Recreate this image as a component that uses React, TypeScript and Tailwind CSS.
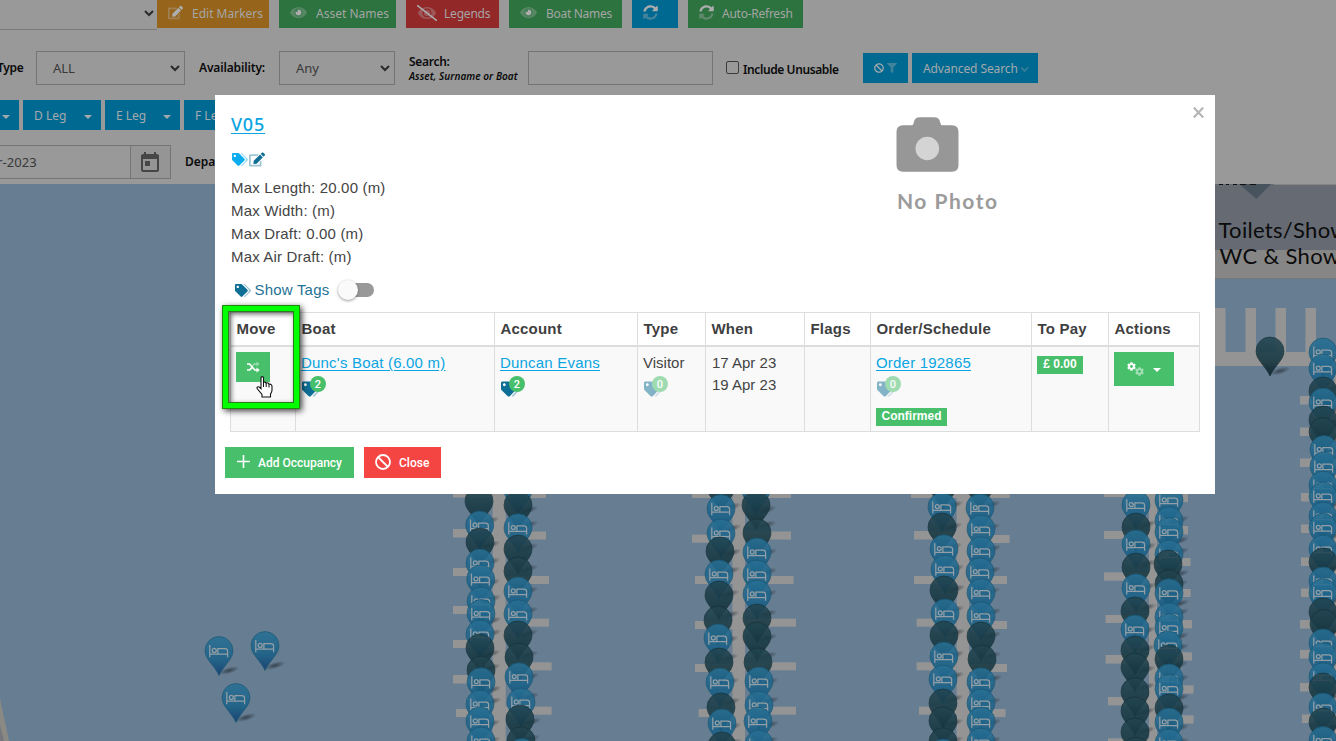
import type { ReactNode } from "react";
import { FaCog, FaBan, FaFilter, FaChevronDown } from "react-icons/fa";
import { MdToday } from "react-icons/md";

/* ---------- duotone icons ---------- */

function TagsIcon({ className }: { className: string }) {
  return (
    <svg viewBox="0 0 640 512" className={className} fill="currentColor">
      <path opacity=".4" d="M625.941 293.823L421.823 497.941c-18.745 18.745-49.137 18.745-67.882 0l-.36-.36L527.64 323.522c16.999-16.999 26.36-39.6 26.36-63.64s-9.362-46.641-26.36-63.64L331.397 0h48.721a48 48 0 0 1 33.941 14.059l211.882 211.882c18.745 18.745 18.745 49.137 0 67.882z" />
      <path d="M497.941 225.941L286.059 14.059A48 48 0 0 0 252.118 0H48C21.49 0 0 21.49 0 48v204.118a48 48 0 0 0 14.059 33.941l211.882 211.882c18.744 18.745 49.136 18.746 67.882 0l204.118-204.118c18.745-18.745 18.745-49.137 0-67.882zM112 160c-26.51 0-48-21.49-48-48s21.49-48 48-48 48 21.49 48 48-21.49 48-48 48z" />
    </svg>
  );
}

function EditIcon({ className }: { className: string }) {
  return (
    <svg viewBox="0 0 576 512" className={className} fill="currentColor">
      <path opacity=".4" d="M384 346.2V448H64V128h229.8c3.2 0 6.2-1.3 8.5-3.5l40-40c7.6-7.6 2.2-20.5-8.5-20.5H48C21.5 64 0 85.5 0 112v352c0 26.5 21.5 48 48 48h352c26.5 0 48-21.5 48-48V306.2c0-10.7-12.9-16-20.5-8.5l-40 40c-2.2 2.3-3.5 5.3-3.5 8.5z" />
      <path d="M402.6 83.2l90.2 90.2c3.8 3.8 3.8 10 0 13.8L274.4 405.6l-92.8 10.3c-12.4 1.4-22.9-9.1-21.5-21.5l10.3-92.8L388.8 83.2c3.8-3.8 10-3.8 13.8 0zm162-22.9l-48.8-48.8c-15.2-15.2-39.9-15.2-55.2 0l-35.4 35.4c-3.8 3.8-3.8 10 0 13.8l90.2 90.2c3.8 3.8 10 3.8 13.8 0l35.4-35.4c15.2-15.3 15.2-40 0-55.2z" />
    </svg>
  );
}

const eyeOuter =
  "M572.52 241.4C518.29 135.59 410.93 64 288 64S57.68 135.64 3.48 241.41a32.35 32.35 0 0 0 0 29.19C57.71 376.41 165.07 448 288 448s230.32-71.64 284.52-177.41a32.35 32.35 0 0 0 0-29.19zM288 400a144 144 0 1 1 144-144 143.93 143.93 0 0 1-144 144z";

function EyeIcon() {
  return (
    <svg viewBox="0 0 576 512" className="h-[15px] w-[17px]" fill="currentColor">
      <path opacity=".35" d={eyeOuter} />
      <circle cx="288" cy="256" r="146" opacity=".2" />
      <path d="M288 160a95.31 95.31 0 0 0-25.31 3.79 47.85 47.85 0 0 1-66.9 66.9A95.78 95.78 0 1 0 288 160z" />
    </svg>
  );
}

function EyeSlashIcon() {
  return (
    <svg viewBox="0 0 640 512" className="h-[16px] w-[20px]" fill="currentColor">
      <g transform="translate(32 0)" opacity=".35">
        <path d={eyeOuter} />
        <circle cx="288" cy="256" r="100" />
      </g>
      <path d="M18 22L622 490" stroke="currentColor" strokeWidth="48" strokeLinecap="round" />
    </svg>
  );
}

function SyncIcon() {
  return (
    <svg viewBox="0 0 512 512" className="h-[15px] w-[15px]" fill="currentColor">
      <path d="M370.72 133.28C339.458 104.008 298.888 87.962 255.848 88c-77.458.068-144.328 53.178-162.791 126.85-1.344 5.363-6.122 9.15-11.651 9.15H24.103c-7.498 0-13.194-6.807-11.807-14.176C33.933 94.924 134.813 8 256 8c66.448 0 126.791 26.136 171.315 68.685L463.03 40.97C478.149 25.851 504 36.559 504 57.941V192c0 13.255-10.745 24-24 24H345.941c-21.382 0-32.09-25.851-16.971-40.971l41.75-41.749z" />
      <path opacity=".4" d="M32 296h134.059c21.382 0 32.09 25.851 16.971 40.971l-41.75 41.75c31.262 29.273 71.835 45.319 114.876 45.28 77.418-.07 144.315-53.144 162.787-126.849 1.344-5.363 6.122-9.15 11.651-9.15h57.304c7.498 0 13.193 6.807 11.807 14.176C478.067 417.076 377.187 504 256 504c-66.448 0-126.791-26.136-171.315-68.685L48.97 471.03C33.851 486.149 8 475.441 8 454.059V320c0-13.255 10.745-24 24-24z" />
    </svg>
  );
}

function ShuffleIcon() {
  return (
    <svg viewBox="0 0 13 12" className="h-[12px] w-[13px]" fill="none" stroke="#fff" strokeWidth="1.7">
      <g opacity=".45">
        <path d="M5.6 5L7.4 3H10" />
        <path d="M9.5 .6L12.6 3L9.5 5.4Z" fill="#fff" stroke="none" />
      </g>
      <path d="M0 9H2.6L5 6.6M0 3H2.6L7.8 9H10" />
      <path d="M9.5 6.4L12.8 9L9.5 11.6Z" fill="#fff" stroke="none" />
    </svg>
  );
}

function Caret({ className }: { className: string }) {
  return (
    <svg viewBox="0 0 8 4" className={`shrink-0 ${className}`} fill="currentColor">
      <path d="M0 0H8L4 4Z" />
    </svg>
  );
}

function SelectArrow() {
  return (
    <svg viewBox="0 0 10 7" className="h-[7px] w-[10px]" fill="none" stroke="#2b2b2b" strokeWidth="2">
      <path d="M1 1L5 5L9 1" />
    </svg>
  );
}

/* ---------- map ---------- */

type Pin = [x: number, top: number, kind: "b" | "d"];

const pins: Pin[] = [
  [219, 636.5, "b"], [265, 631.5, "b"], [236, 683.5, "b"], [1270, 337, "d"],
  // first pontoon
  [479, 487, "d"], [479.7, 511, "b"], [480, 528, "d"], [480, 549, "b"], [480.7, 565, "b"], [481, 587, "b"], [481, 599.5, "b"],
  [480, 620, "b"], [480, 634, "d"], [481, 656, "d"], [481, 667.7, "b"], [480, 690, "b"], [480, 707, "b"], [481, 727, "b"],
  [518, 476, "b"], [518, 491, "d"], [518, 513.7, "b"], [518, 535, "d"], [518, 557, "d"], [518, 577, "b"], [518, 599.7, "b"],
  [518, 621, "d"], [519, 643, "d"], [519, 662.7, "b"], [521, 688, "b"], [520, 705, "d"], [521, 726.7, "d"], [522, 738.5, "b"],
  // second pontoon
  [721, 473, "d"], [721, 494.5, "b"], [721, 519, "b"], [720, 537, "d"], [719, 560, "b"], [719, 581, "d"], [718, 606, "d"],
  [718, 624, "b"], [719, 648, "d"], [720, 668, "b"], [721, 693, "d"], [722, 709, "b"], [722, 732, "d"],
  [756, 476, "b"], [756, 491, "d"], [757, 518.7, "d"], [757, 538, "b"], [757, 560, "b"], [757, 580, "b"], [757, 604, "d"],
  [757, 622, "d"], [758, 648, "d"], [759, 667, "b"], [759, 691, "b"], [758, 707, "b"], [759, 730, "b"],
  // third pontoon
  [943, 471, "d"], [942, 492.7, "b"], [942, 513, "d"], [944, 534.7, "b"], [945, 555, "b"], [944, 576, "d"], [945, 599, "b"],
  [944, 621, "d"], [944, 642, "b"], [943, 665, "b"], [943, 689, "d"], [943, 706.7, "d"], [943, 727.7, "d"], [943, 739, "b"],
  [980, 471, "d"], [980, 493.7, "b"], [981, 515, "b"], [981, 536.7, "b"], [980, 557.7, "b"], [981, 578.5, "b"], [981, 601.7, "b"],
  [981, 622, "d"], [982, 645, "d"], [981, 667.7, "b"], [981, 689, "b"], [981, 707, "b"], [981, 728, "b"],
  // fourth pontoon
  [1136, 490.7, "b"], [1136, 513, "d"], [1136, 530, "b"], [1136, 553, "d"], [1136, 573.7, "b"], [1135, 597, "d"], [1135, 615, "b"],
  [1135, 636, "d"], [1135, 653, "d"], [1135, 677.7, "d"], [1135, 696.7, "d"], [1135, 718, "d"], [1136, 737, "d"],
  [1169, 486, "b"], [1169, 506.7, "b"], [1169, 517.7, "b"], [1169, 540, "b"], [1168, 550, "d"], [1169, 569.7, "d"], [1169, 578.7, "b"],
  [1169, 602.7, "b"], [1169, 613.7, "b"], [1168, 631, "b"], [1169, 645, "d"], [1169, 664, "b"], [1169, 674.5, "b"], [1169, 694, "d"],
  [1169, 708, "b"], [1169, 729, "b"],
  // fifth pontoon
  [1323, 338, "b"], [1323, 354.3, "b"], [1323, 377, "d"], [1323, 388, "b"], [1323, 406, "d"], [1323, 417.6, "d"], [1324, 435.5, "b"],
  [1324, 452, "b"], [1323, 471, "b"], [1323, 482, "b"], [1323, 502, "b"], [1323, 513.4, "b"], [1323, 535, "b"], [1323, 548, "d"],
  [1323, 567, "b"], [1323, 578.6, "b"], [1323, 598, "d"], [1324, 609.5, "d"], [1323, 629, "b"], [1323, 642.7, "b"], [1323, 662.7, "b"],
  [1323, 673, "d"], [1323, 693, "b"], [1323, 708, "d"], [1323, 726.5, "b"],
];

const drawOrder = [...pins].sort((a, b) => a[1] - b[1]);

// [x, y, width, height] of every berth finger and walkway
const planks: [number, number, number, number][] = [
  [492.7, 490, 13, 251], [732.5, 490, 12.5, 251], [956.7, 490, 12.3, 251], [1149, 490, 8, 251], [1334, 352, 4, 389],
  [1215, 308, 10.5, 58], [1245.5, 308, 10.5, 58], [1275.5, 308, 10.5, 58], [1305.5, 308, 10.5, 58], [1215, 352, 121, 14],
  [453, 490, 40, 7.5], [453, 529, 40, 8.5], [453, 568, 40, 8], [453, 606, 40, 8], [453, 640, 40, 8], [453, 675, 40, 8.5], [456, 709, 40, 8],
  [505, 490, 41, 8], [505, 531.5, 41, 8], [505, 576, 44, 8], [505, 618.7, 44, 8], [505, 662.3, 46.6, 8], [505, 706.7, 46.6, 8],
  [692, 490, 40, 8], [692, 534.7, 40, 8], [695, 576, 40, 8], [695, 621, 40, 8], [695, 664, 40, 8], [698.6, 709, 40, 8],
  [745, 490, 46, 8], [745, 531.5, 46, 8], [745, 576, 48.6, 8], [745, 618.7, 51, 8], [745, 662.3, 51, 8], [745, 706.7, 51, 8],
  [911, 490, 46, 8], [914, 531, 43, 8.5], [914, 576, 43, 8], [916.6, 618.7, 40, 8], [916.6, 662.3, 40, 8], [919, 706.7, 40, 8],
  [969, 490, 40.6, 8], [969, 535, 40.6, 8], [969, 576, 38, 8], [969, 621, 38, 8], [969, 664, 38, 8], [969, 709, 36.6, 8],
  [1104, 490, 45, 7], [1104, 531, 45, 8], [1104, 572.3, 45, 8.4], [1105.6, 615, 44, 8], [1105.6, 655, 44, 8.6], [1108, 697, 41, 8.3], [1108, 738.3, 41, 8],
  [1157, 494, 31, 8], [1157, 526, 31, 8.3], [1157, 558, 33.6, 8], [1157, 589, 33.6, 8], [1157, 620, 35, 8.3], [1157, 652.3, 35, 8.3], [1157, 685.3, 36.6, 8.3], [1157, 715.3, 36.6, 8.3],
  [1300, 396, 12, 8.5], [1300, 427.5, 12, 8.5], [1300, 458.5, 12, 8.5], [1301, 493, 12, 8.5], [1301, 524.5, 12, 8.5], [1301, 557.5, 12, 8.5],
  [1301, 588.5, 12, 8.5], [1300, 620, 12, 8.5], [1300, 650, 12, 8.5], [1300, 683, 12, 8.5], [1302, 714.5, 12, 8.5],
];

function MapPin({ x, top, kind }: { x: number; top: number; kind: "b" | "d" }) {
  const blue = kind === "b";
  return (
    <g transform={`translate(${x} ${top})`}>
      <ellipse cx="10" cy="34" rx="11" ry="3.4" transform="rotate(-16 10 34)" fill="url(#shade)" />
      <path
        d="M0 39C-2 34.5-6 29.5-9 25.5C-12 21.5-13.9 18.5-13.9 14A13.9 13.9 0 0 1 13.9 14C13.9 18.5 12 21.5 9 25.5C6 29.5 2 34.5 0 39Z"
        fill={blue ? "url(#bluePin)" : "url(#darkPin)"}
        stroke={blue ? "#1a5876" : "#17323b"}
        strokeWidth=".9"
        opacity=".88"
      />
      {blue && (
        <g fill="none" stroke="#939fa6" strokeWidth="1.25">
          <path d="M-9.2 8.500V20.700M-9.2 17.700H8.6V20.700M-1.1 17.700V12.100H5.8Q8.6 12.100 8.6 14.500V17.700" />
          <circle cx="-4.7" cy="13.9" r="2" />
        </g>
      )}
    </g>
  );
}

function MarinaMap() {
  return (
    <svg viewBox="0 184 1336 557" className="block h-[557px] w-full shrink-0">
      <defs>
        <linearGradient id="bluePin" x1="0" y1="0" x2="0" y2="1">
          <stop offset="0" stopColor="#297195" />
          <stop offset=".6" stopColor="#1a6087" />
          <stop offset="1" stopColor="#133a6e" />
        </linearGradient>
        <linearGradient id="darkPin" x1="0" y1="0" x2="0" y2="1">
          <stop offset="0" stopColor="#234652" />
          <stop offset=".6" stopColor="#163741" />
          <stop offset="1" stopColor="#0b2028" />
        </linearGradient>
        <radialGradient id="shade">
          <stop offset="0" stopColor="#26303a" stopOpacity=".75" />
          <stop offset="1" stopColor="#26303a" stopOpacity="0" />
        </radialGradient>
      </defs>
      <rect y="184" width="1336" height="557" fill="#677e92" />
      <path d="M0 699L9 741H0Z" fill="#8b8984" />
      <path d="M0 725L4 741H0Z" fill="#74777c" />
      <rect x="1200" y="184" width="136" height="66" fill="#666a73" />
      <rect x="1200" y="250" width="136" height="28" fill="#868686" />
      <path d="M1200 278.5H1336" stroke="#75797d" />
      <path d="M1274 184.5H1336" stroke="#858585" />
      <path d="M1239 184H1271L1256.5 199Z" fill="#47545d" />
      <path d="M1219 184.5H1223M1226 184.5H1229M1233 184.5H1237M1240 184.5H1246M1250 184.5H1256" stroke="#111" />
      <g fill="#0b0b0b" fontFamily="Lato, sans-serif" fontSize="22">
        <text x="1218.500" y="237.500" letterSpacing=".3">Toilets/Showers</text>
        <text x="1219.500" y="264" letterSpacing=".35">WC &amp; Showers</text>
      </g>
      <g fill="#949494">
        {planks.map(([x, y, w, h], i) => (
          <rect key={i} x={x} y={y} width={w} height={h} />
        ))}
      </g>
      {drawOrder.map(([x, top, kind], i) => (
        <MapPin key={i} x={x} top={top} kind={kind} />
      ))}
    </svg>
  );
}

/* ---------- page behind the dialog ---------- */

function ToolButton({ className, icon, children }: { className: string; icon: ReactNode; children?: ReactNode }) {
  return (
    <button className={`flex h-[28px] shrink-0 items-center pl-[11px] text-[12px] whitespace-nowrap text-[#a5a5a5] ${className}`}>
      <span className="-mt-[3px] mr-[9px] shrink-0 text-[#adadad]">{icon}</span>
      {children}
    </button>
  );
}

function LegButton({ className, children }: { className: string; children?: ReactNode }) {
  return (
    <button className={`flex h-[30px] shrink-0 items-center bg-[#006991] pr-[9px] text-[12px] whitespace-nowrap text-[#a3a9ac] ${className}`}>
      <span className="mt-[2px]">{children}</span>
      <Caret className="mt-[3px] ml-auto h-[4px] w-[8px]" />
    </button>
  );
}

function Filters() {
  return (
    <header className="h-[184px] shrink-0 bg-[#999] font-['Noto_Sans',sans-serif]">
      <div className="flex h-[30px]">
        <div className="flex w-[157px] shrink-0 items-center justify-end border-b border-[#7a7a7a] pr-[3px] pb-[2px]">
          <SelectArrow />
        </div>
        <div className="flex gap-[10px]">
          <ToolButton className="w-[112px] bg-[#96651b]" icon={<EditIcon className="h-[15px] w-[15px]" />}>
            Edit Markers
          </ToolButton>
          <ToolButton className="w-[117px] bg-[#2c7340]" icon={<EyeIcon />}>Asset Names</ToolButton>
          <ToolButton className="w-[93px] bg-[#932828]" icon={<EyeSlashIcon />}>
            <span className="-ml-[2px] tracking-[-0.2px]">Legends</span>
          </ToolButton>
          <ToolButton className="w-[113px] bg-[#2c7340]" icon={<EyeIcon />}>
            <span className="tracking-[-0.3px]">Boat Names</span>
          </ToolButton>
          <ToolButton className="w-[46px] bg-[#006991]" icon={<SyncIcon />} />
          <ToolButton className="w-[115px] bg-[#2c7340]" icon={<SyncIcon />}>
            <span className="-ml-px tracking-[-0.25px]">Auto-Refresh</span>
          </ToolButton>
        </div>
      </div>

      <div className="mt-[21px] flex h-[34px] items-center text-[12px] font-semibold whitespace-nowrap text-[#0a0a0a]">
        <span className="-ml-[3px] w-[39px] tracking-[-0.3px]">Type</span>
        <div className="flex h-[34px] w-[149px] items-center justify-between border border-[#757575] pr-[4px] pl-[16px] text-[13px] font-normal text-[#383838]">
          <span className="mt-[2px]">ALL</span> <SelectArrow />
        </div>
        <span className="ml-[14px] w-[80px] tracking-[-0.15px]">Availability:</span>
        <div className="flex h-[34px] w-[116px] items-center justify-between border border-[#757575] pr-[4px] pl-[16px] text-[13px] font-normal text-[#383838]">
          <span className="mt-[2px]">Any</span> <SelectArrow />
        </div>
        <div className="ml-[14px] w-[119px] pt-px leading-[15px]">
          <div className="tracking-[-0.3px]">Search:</div>
          <div className="text-[10px] tracking-[0.04px] italic">Asset, Surname or Boat</div>
        </div>
        <div className="h-[34px] w-[185px] border border-[#757575]" />
        <div className="-mt-px ml-[13px] h-[13px] w-[13px] rounded-[2px] border border-[#3c3c3c]" />
        <span className="mt-[4px] ml-[4px] w-[120px] tracking-[-0.4px]">Include Unusable</span>
        <button className="flex h-[30px] w-[45px] items-center justify-center gap-[3px] bg-[#006991] text-[#a3a9ac]">
          <FaBan className="h-[10px] w-[10px]" />
          <FaFilter className="h-[10px] w-[10px] opacity-40" />
        </button>
        <button className="ml-[4px] flex h-[30px] w-[126px] items-center gap-[2px] bg-[#006991] pt-[2px] pl-[11px] text-[12px] font-normal tracking-[-0.1px] text-[#a3a9ac]">
          Advanced Search
          <FaChevronDown className="h-[9px] w-[9px] opacity-40" />
        </button>
      </div>

      <div className="mt-[15px] flex gap-[4px]">
        <LegButton className="w-[19px]" />
        <LegButton className="w-[78px] pl-[11px]">D Leg</LegButton>
        <LegButton className="w-[75px] pl-[11px]">E Leg</LegButton>
        <LegButton className="w-[78px] pl-[11px]">F Leg</LegButton>
      </div>

      <div className="mt-[15px] flex h-[34px] items-center">
        <div className="flex h-[34px] w-[131px] items-center border-y border-r border-[#757575] text-[13px] text-[#383838]">
          <span className="mt-[2px] -ml-[3px] tracking-[0.1px]">r-2023</span>
        </div>
        <div className="flex h-[34px] w-[40px] items-center justify-center border-y border-r border-[#757575] bg-[#959595]">
          <MdToday className="mt-[2px] -ml-px h-[24px] w-[24px] text-[#464646]" />
        </div>
        <span className="ml-[14px] text-[12px] font-semibold text-[#0a0a0a]">Departure:</span>
      </div>
    </header>
  );
}

/* ---------- dialog ---------- */

function TagCount({ count }: { count: number }) {
  return (
    <div className={`relative mt-[7px] h-[18px] w-[26px] ${count === 0 ? "opacity-50" : ""}`}>
      <TagsIcon className="ml-px h-[16px] w-[19px] text-[#0e6f96]" />
      <span className="absolute -top-[5px] left-[9px] flex h-[16px] w-[16px] items-center justify-center rounded-full bg-[#48bf6b] font-[Roboto,sans-serif] text-[11px] leading-none font-medium text-white">
        {count}
      </span>
    </div>
  );
}

const linkClass = "text-[#0ba5e2] underline underline-offset-[2px]";

function Th({ children }: { children: ReactNode }) {
  return (
    <div className="flex h-[32px] items-center border-l border-[#ddd] pl-[5.5px] font-bold tracking-[0.2px] text-[#3f3f3f]">{children}</div>
  );
}

function Td({ children }: { children?: ReactNode }) {
  return <div className="border-l border-[#ddd] pt-[5px] pl-[5px]">{children}</div>;
}

const columns = "grid grid-cols-[65px_199px_143px_68px_99px_66px_161px_77px_92px] border-r border-[#ddd]";

function OccupancyTable() {
  return (
    <div className="mt-[11px] ml-[15px] w-[970px] border-y border-[#ddd] text-[15px] leading-[22px] whitespace-nowrap text-[#444]">
      <div className={columns}>
        <Th>Move</Th>
        <Th>Boat</Th>
        <Th>Account</Th>
        <Th>Type</Th>
        <Th>When</Th>
        <Th>Flags</Th>
        <Th>Order/Schedule</Th>
        <Th>To Pay</Th>
        <Th>Actions</Th>
      </div>
      <div className={`${columns} h-[86px] border-t-2 border-t-[#ddd] bg-[#f9f9f9]`}>
        <Td>
          <button className="flex h-[30px] w-[34px] items-center justify-center bg-[#48bf6b]">
            <ShuffleIcon />
          </button>
        </Td>
        <Td>
          <a className={`${linkClass} tracking-[0.2px]`}>Dunc's Boat (6.00 m)</a>
          <TagCount count={2} />
        </Td>
        <Td>
          <a className={`${linkClass} tracking-[0.2px]`}>Duncan Evans</a>
          <TagCount count={2} />
        </Td>
        <Td>
          Visitor
          <TagCount count={0} />
        </Td>
        <Td>
          <div className="pl-px">17 Apr 23</div>
          <div className="pl-px">19 Apr 23</div>
        </Td>
        <Td />
        <Td>
          <a className={`${linkClass} tracking-[0.2px]`}>Order 192865</a>
          <TagCount count={0} />
          <div className="mt-[9px] flex h-[18px] w-[71px] items-center justify-center bg-[#48bf6b] text-[12px] leading-none font-bold text-white">
            <span className="-mt-[2px]">Confirmed</span>
          </div>
        </Td>
        <Td>
          <div className="mt-[4px] flex h-[18px] w-[46px] items-center justify-center bg-[#48bf6b] text-[12px] leading-none font-bold text-white">
            <span className="-mt-[2px]">£ 0.00</span>
          </div>
        </Td>
        <Td>
          <button className="flex h-[34px] w-[60px] items-center bg-[#48bf6b] pl-[13px] text-white">
            <FaCog className="-mt-[5px] h-[9px] w-[9px]" />
            <FaCog className="mt-[4px] -ml-px h-[9px] w-[9px] opacity-50" />
            <Caret className="mt-[2px] ml-[9px] h-[4px] w-[8px]" />
          </button>
        </Td>
      </div>
    </div>
  );
}

function Camera() {
  return (
    <svg viewBox="0 0 63 55" className="h-[55px] w-[63px]">
      <path
        d="M7 8.3H15.5Q17.5 8.3 17.8 5.5Q18.5 .3 24 .3H38Q43.500 .3 44.200 5.500Q44.500 8.300 46.500 8.300H56Q62.500 8.300 62.500 15V48Q62.500 54.700 56 54.700H7Q.5 54.700 .5 48V15Q.5 8.300 7 8.300Z"
        fill="#979797"
      />
      <circle cx="31.300" cy="31.500" r="11.800" fill="#d4d4d4" />
    </svg>
  );
}

function Dialog() {
  return (
    <section className="absolute top-[95px] left-[215px] h-[399px] w-[1000px] bg-white font-['Liberation_Sans',Arial,sans-serif]">
      <div className="flex h-[182px] pl-[16px] text-[#444]">
        <div className="w-[665px]">
          <a className="mt-[17px] block h-[24px] w-fit font-['Noto_Sans',sans-serif] text-[18px] leading-[24px] font-medium tracking-[0.8px] text-[#0ba5e2] underline underline-offset-[2px]">
            V05
          </a>
          <div className="mt-[15px] flex h-[16px] items-center gap-[2px]">
            <TagsIcon className="ml-px h-[13px] w-[16px] text-[#0badee]" />
            <EditIcon className="-ml-px h-[15px] w-[16px] text-[#0e6f96]" />
          </div>
          <div className="mt-[9px] text-[15px] leading-[23px] tracking-[0.17px]">
            <p>Max Length: 20.00 (m)</p>
            <p>Max Width: (m)</p>
            <p>Max Draft: 0.00 (m)</p>
            <p>Max Air Draft: (m)</p>
          </div>
        </div>
        <div className="mt-[22px] grow">
          <Camera />
          <p className="mt-[15px] ml-px font-[Lato,sans-serif] text-[21px] leading-[28px] font-bold tracking-[1.5px] text-[#9b9b9b]">No Photo</p>
        </div>
        <button className="mt-[12px] mr-[11px] h-[11px] w-[11px]">
          <svg viewBox="0 0 11 11" className="h-[11px] w-[11px]" stroke="#b4b4b4" strokeWidth="2.200">
            <path d="M.8 .6L10.200 10.400M10.200 .6L.8 10.400" />
          </svg>
        </button>
      </div>

      <div className="flex h-[24px] items-center pt-[2px] pl-[20px] text-[15px] text-[#1f7396]">
        <TagsIcon className="h-[13px] w-[16px] text-[#0e6f96]" />
        <span className="ml-[3.5px] w-[82.5px] tracking-[0.2px]">Show Tags</span>
        <div className="ml-px flex h-[14px] w-[36px] items-center rounded-full bg-gradient-to-r from-transparent from-25% to-[#999] to-25%">
          <span className="h-[20px] w-[20px] rounded-full bg-[#fafafa] shadow-[0_1px_3px_rgba(0,0,0,0.4)]" />
        </div>
      </div>

      <OccupancyTable />

      <div className="mt-[15px] ml-[10px] flex gap-[10px] font-[Roboto,sans-serif] text-[12px] font-medium text-white">
        <button className="flex h-[31px] w-[129px] items-center bg-[#48bf6b] pl-[12px]">
          <svg viewBox="0 0 13 13" className="-mt-[2px] mr-[8px] h-[13px] w-[13px]" stroke="#fff" strokeWidth="1.600">
            <path d="M6.500 0V13M0 6.500H13" />
          </svg>
          Add Occupancy
        </button>
        <button className="flex h-[31px] w-[77px] items-center bg-[#f44542] pl-[11px]">
          <svg viewBox="0 0 16 16" className="-mt-[2px] mr-[8px] h-[16px] w-[16px]" fill="none" stroke="#fff" strokeWidth="1.800">
            <circle cx="8" cy="8" r="7" />
            <path d="M3 3L13 13" />
          </svg>
          Close
        </button>
      </div>
    </section>
  );
}

function Highlight() {
  return (
    <div className="absolute top-[305px] left-[222px] h-[104px] w-[78px] border-[1.5px] border-[#1f8a0c] shadow-[2px_2px_6px_rgba(0,0,0,0.75)]">
      <div className="h-full w-full border-[5px] border-[#00ff00]">
        <div className="h-full w-full border border-[#2c7a1e] shadow-[inset_2px_2px_5px_rgba(0,0,0,0.6)]" />
      </div>
    </div>
  );
}

function HandCursor() {
  return (
    <svg viewBox="0 0 17 22" className="absolute top-[376px] left-[256px] h-[22px] w-[17px]">
      <path
        d="M5 1.700Q5 .6 6.200 .6T7.500 1.700V7Q8 5.800 9 6.100Q10 6.300 10.200 7.300Q11 6.500 12 7Q12.800 7.400 13 8.300Q14 7.800 15 8.500Q16 9 16 10.500V14Q16 16.500 14.500 18V21H6V18.500L1.300 12.800Q.6 11.500 1.500 10.900Q2.600 10.300 3.800 11.500L5 12.700Z"
        fill="#fff"
        stroke="#111"
        strokeWidth="1.100"
      />
      <path d="M7.500 7V11M10.200 7.500V11M13 8.500V11.500" stroke="#111" fill="none" />
    </svg>
  );
}

export default function App() {
  return (
    <main className="relative flex h-[741px] w-[1336px] flex-col overflow-hidden bg-[#677e92]">
      <Filters />
      <MarinaMap />
      <Dialog />
      <Highlight />
      <HandCursor />
    </main>
  );
}
